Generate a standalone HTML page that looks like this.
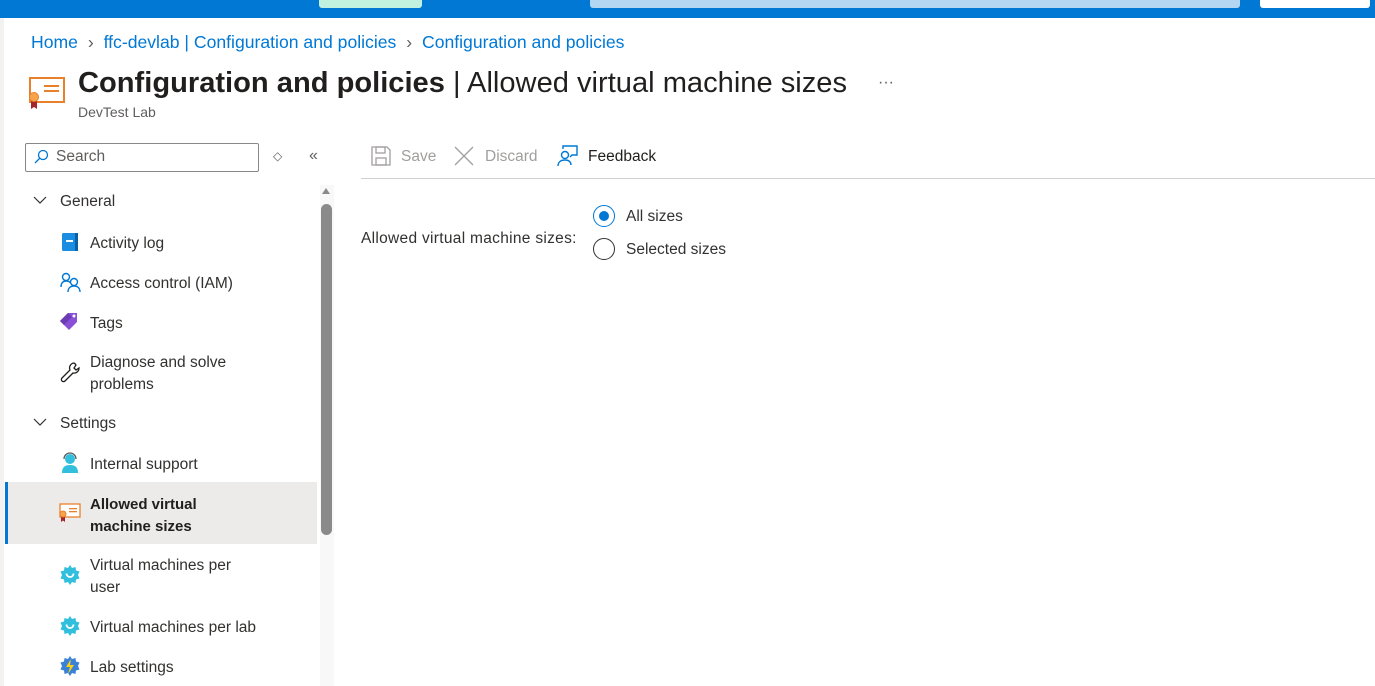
<!DOCTYPE html>
<html><head><meta charset="utf-8"><style>
*{margin:0;padding:0;box-sizing:border-box}
body{width:1375px;height:686px;overflow:hidden;background:#fff;font-family:"Segoe UI","Liberation Sans",sans-serif;color:#323130;position:relative;font-size:15.5px}
.abs{position:absolute;white-space:nowrap}
.nav{position:absolute;left:90px;font-size:15.5px;line-height:22px}
.ic{position:absolute;left:60px}
</style></head><body>
<div class="abs" style="left:0;top:0;width:1375px;height:18px;background:#0078d4"></div>
<div class="abs" style="left:319px;top:0;width:103px;height:8px;background:#c0f2df;border-radius:0 0 3px 3px"></div>
<div class="abs" style="left:590px;top:0;width:650px;height:8px;background:#b3d6f2;border-radius:0 0 3px 3px"></div>
<div class="abs" style="left:1260px;top:0;width:110px;height:8px;background:#fff;border-radius:0 0 3px 3px"></div>
<div class="abs" style="left:0;top:18px;width:4px;height:668px;background:#f3f2f1"></div>

<div class="abs" style="left:31px;top:31px;font-size:17.6px;line-height:22px;color:#0078d4">Home <span style="color:#605e5c;margin:0 5px">&#x203A;</span> ffc-devlab | Configuration and policies <span style="color:#605e5c;margin:0 5px">&#x203A;</span> Configuration and policies</div>

<svg class="abs" style="left:28px;top:76px" width="38" height="34" viewBox="0 0 38 34"><rect x="2" y="2" width="34" height="24" fill="#fff" stroke="#e8812b" stroke-width="2"/><rect x="16" y="9" width="15" height="2" fill="#e8812b"/><rect x="16" y="14" width="15" height="2" fill="#e8812b"/><path d="M3 24v9l3-2 3 2v-9z" fill="#a4262c"/><circle cx="6" cy="21" r="4.5" fill="#f7a44c" stroke="#e8812b"/></svg>
<div class="abs" style="left:78px;top:64px;font-size:29.1px;line-height:38px;color:#201f1e"><b style="font-weight:700">Configuration and policies</b> | Allowed virtual machine sizes</div>
<div class="abs" style="left:878px;top:74px;font-size:16px;color:#605e5c">&middot;&middot;&middot;</div>
<div class="abs" style="left:78px;top:104px;font-size:14px;color:#605e5c">DevTest Lab</div>

<div class="abs" style="left:25px;top:143px;width:234px;height:29px;border:1px solid #8a8886;border-radius:2px"></div>
<svg class="abs" style="left:33px;top:149px" width="16" height="16" viewBox="0 0 16 16"><circle cx="10" cy="6" r="4.5" fill="none" stroke="#0078d4" stroke-width="1.3"/><path d="M7 9L2 14" stroke="#0078d4" stroke-width="1.3"/></svg>
<div class="abs" style="left:56px;top:148px;font-size:15.5px;color:#605e5c">Search</div>
<div class="abs" style="left:273px;top:149px;font-size:12px;color:#605e5c">&#x25C7;</div>
<div class="abs" style="left:309px;top:147px;font-size:16px;color:#605e5c">&#xAB;</div>

<div class="abs" style="left:320px;top:185px;width:14px;height:501px;background:#f8f8f8"></div>
<div class="abs" style="left:322px;top:188px;width:0;height:0;border-left:4px solid transparent;border-right:4px solid transparent;border-bottom:6px solid #8a8a8a"></div>
<div class="abs" style="left:321px;top:204px;width:11px;height:331px;background:#8a8a8a;border-radius:6px"></div>

<svg class="abs" style="left:33px;top:195px" width="14" height="10" viewBox="0 0 14 10"><path d="M1 2l6 6 6-6" fill="none" stroke="#323130" stroke-width="1.2"/></svg>
<div class="abs" style="left:60px;top:191px;font-size:15.5px;line-height:22px">General</div>
<svg class="ic" style="top:232px;left:61px" width="18" height="20" viewBox="0 0 18 20"><rect x="1" y="1" width="16" height="18" rx="1.5" fill="#1b8de0"/><rect x="14" y="1" width="3" height="18" fill="#0a5fa8"/><rect x="5" y="8" width="7" height="2" fill="#fff"/></svg>
<div class="nav" style="top:233px">Activity log</div>
<svg class="ic" style="top:272px" width="22" height="20" viewBox="0 0 22 20"><circle cx="6" cy="5" r="3.5" fill="none" stroke="#0078d4" stroke-width="1.4"/><path d="M1 15c0-4 2-6 5-6s4 1 4.5 2" fill="none" stroke="#0078d4" stroke-width="1.4"/><circle cx="14" cy="10" r="3.5" fill="none" stroke="#0078d4" stroke-width="1.4"/><path d="M8 20c0-4 2.5-6 6-6s6 2 6 6" fill="none" stroke="#0078d4" stroke-width="1.4"/></svg>
<div class="nav" style="top:273px">Access control (IAM)</div>
<svg class="ic" style="top:311px" width="20" height="20" viewBox="0 0 20 20"><path d="M8 2h9v9l-8 8-9-9z" fill="#8a4fd6"/><path d="M8 2l-8 8 4 4 8-8z" fill="#6a3bb5"/><circle cx="14" cy="5" r="1.5" fill="#fff"/></svg>
<div class="nav" style="top:313px">Tags</div>
<svg class="ic" style="top:362px" width="20" height="22" viewBox="0 0 20 22"><path d="M14 1a5 5 0 0 0-4 7L2 16a2 2 0 0 0 3 3l8-8a5 5 0 0 0 6-5l-3 2-2-2 2-3a5 5 0 0 0-2-2z" fill="none" stroke="#201f1e" stroke-width="1.3"/></svg>
<div class="nav" style="top:352px">Diagnose and solve<br>problems</div>

<svg class="abs" style="left:33px;top:417px" width="14" height="10" viewBox="0 0 14 10"><path d="M1 2l6 6 6-6" fill="none" stroke="#323130" stroke-width="1.2"/></svg>
<div class="abs" style="left:60px;top:413px;font-size:15.5px;line-height:22px">Settings</div>
<svg class="ic" style="top:452px;left:61px" width="18" height="21" viewBox="0 0 18 21"><circle cx="9" cy="7" r="5" fill="#32bedd"/><path d="M1 21c0-6 3-8 8-8s8 2 8 8z" fill="#32bedd"/><path d="M3 7a6 6 0 0 1 12 0" fill="none" stroke="#5a5a5a" stroke-width="1.3"/></svg>
<div class="nav" style="top:454px">Internal support</div>

<div class="abs" style="left:5px;top:482px;width:312px;height:62px;background:#edebe9;border-left:3px solid #0078d4"></div>
<svg class="ic" style="top:503px;left:59px" width="22" height="20" viewBox="0 0 22 20"><rect x="1" y="1" width="20" height="13" fill="#fff" stroke="#e8812b" stroke-width="1.3"/><rect x="10" y="5" width="8" height="1.3" fill="#e8812b"/><rect x="10" y="8" width="8" height="1.3" fill="#e8812b"/><path d="M2 12v7l2-1.5 2 1.5v-7z" fill="#a4262c"/><circle cx="4" cy="11" r="3" fill="#f7a44c" stroke="#e8812b"/></svg>
<div class="nav" style="top:494px;font-weight:700;color:#201f1e;font-size:15px">Allowed virtual<br>machine sizes</div>

<svg class="ic" style="top:565px" width="20" height="20" viewBox="0 0 20 20"><path d="M10 0l2 3 3.5-1 .5 3.5 3.5 1-1.5 3.5 1.5 3.5-3.5 1-.5 3.5-3.5-1-2 3-2-3-3.5 1-.5-3.5-3.5-1L2 10 .5 6.5l3.5-1L4.5 2 8 3z" fill="#32bedd"/><path d="M6.5 8.5a3.5 3.5 0 1 0 7 0" fill="none" stroke="#fff" stroke-width="1.8"/></svg>
<div class="nav" style="top:555px">Virtual machines per<br>user</div>
<svg class="ic" style="top:616px" width="20" height="20" viewBox="0 0 20 20"><path d="M10 0l2 3 3.5-1 .5 3.5 3.5 1-1.5 3.5 1.5 3.5-3.5 1-.5 3.5-3.5-1-2 3-2-3-3.5 1-.5-3.5-3.5-1L2 10 .5 6.5l3.5-1L4.5 2 8 3z" fill="#32bedd"/><path d="M6.5 8.5a3.5 3.5 0 1 0 7 0" fill="none" stroke="#fff" stroke-width="1.8"/></svg>
<div class="nav" style="top:617px">Virtual machines per lab</div>
<svg class="ic" style="top:656px" width="20" height="20" viewBox="0 0 20 20"><path d="M10 0l2 3 3.5-1 .5 3.5 3.5 1-1.5 3.5 1.5 3.5-3.5 1-.5 3.5-3.5-1-2 3-2-3-3.5 1-.5-3.5-3.5-1L2 10 .5 6.5l3.5-1L4.5 2 8 3z" fill="#3b82d6"/><path d="M11 3l-5 8h4l-2 7 6-9h-4z" fill="#fcd116"/></svg>
<div class="nav" style="top:657px">Lab settings</div>

<svg class="abs" style="left:371px;top:146px" width="20" height="20" viewBox="0 0 20 20"><path d="M1 1h15l3 3v15H1z" fill="none" stroke="#a19f9d" stroke-width="1.3"/><rect x="5" y="1" width="9" height="6" fill="none" stroke="#a19f9d" stroke-width="1.3"/><rect x="5" y="12" width="10" height="7" fill="none" stroke="#a19f9d" stroke-width="1.3"/></svg>
<div class="abs" style="left:401px;top:148px;font-size:15.5px;color:#a19f9d">Save</div>
<svg class="abs" style="left:454px;top:146px" width="20" height="20" viewBox="0 0 20 20"><path d="M1 1l18 18M19 1L1 19" stroke="#a19f9d" stroke-width="1.3"/></svg>
<div class="abs" style="left:485px;top:148px;font-size:15.5px;color:#a19f9d">Discard</div>
<svg class="abs" style="left:557px;top:145px" width="22" height="22" viewBox="0 0 22 22"><circle cx="8" cy="10" r="3.5" fill="none" stroke="#0078d4" stroke-width="1.4"/><path d="M1 21c0-4 3-6 7-6s6 2 6 5" fill="none" stroke="#0078d4" stroke-width="1.4"/><path d="M6 4V1h14v9h-5l-2 2" fill="none" stroke="#0078d4" stroke-width="1.4"/></svg>
<div class="abs" style="left:588px;top:148px;font-size:15.5px;color:#201f1e">Feedback</div>
<div class="abs" style="left:361px;top:178px;width:1014px;height:1px;background:#d2d0ce"></div>

<div class="abs" style="left:361px;top:230px;font-size:15.5px;letter-spacing:0.3px">Allowed virtual machine sizes:</div>
<div class="abs" style="left:593px;top:205px;width:22px;height:22px;border:1.5px solid #0078d4;border-radius:50%"></div>
<div class="abs" style="left:599px;top:211px;width:10px;height:10px;background:#0078d4;border-radius:50%"></div>
<div class="abs" style="left:626px;top:208px;font-size:15.5px">All sizes</div>
<div class="abs" style="left:593px;top:238px;width:22px;height:22px;border:1.5px solid #323130;border-radius:50%"></div>
<div class="abs" style="left:626px;top:241px;font-size:15.5px">Selected sizes</div>
</body></html>
